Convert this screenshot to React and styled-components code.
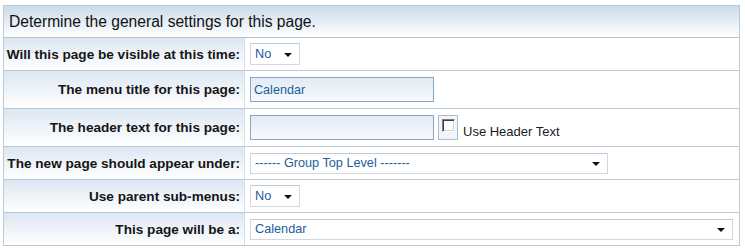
import React from "react";
import styled, { createGlobalStyle } from "styled-components";

const Global = createGlobalStyle`
  body {
    margin: 0;
    background: #ffffff;
    font-family: "Liberation Sans", Arial, sans-serif;
  }
`

const Panel = styled.div`
  margin: 5px 0 0 3px;
  width: 735px;
  border: 1px solid #b9c9d8;
  display: grid;
  grid-template-columns: 241px 1fr;
`

const Caption = styled.div`
  grid-column: 1 / 3;
  height: 31px;
  border-bottom: 1px solid #b3c3d1;
  background: linear-gradient(#c9dbeb, #ffffff);
  display: flex;
  align-items: center;
  padding-left: 5px;
  font-size: 15.6px;
  color: #111;
`

const Label = styled.div`
  height: ${p => p.$h}px;
  border-bottom: ${p => (p.$last ? "none" : "1px solid #b9c9d8")};
  border-right: 1px solid #d4dfe9;
  background: linear-gradient(#dce7f2, #ffffff);
  display: flex;
  align-items: center;
  justify-content: flex-end;
  padding-right: 4px;
  font-size: 13.6px;
  font-weight: bold;
  color: #151515;
`

const Value = styled.div`
  height: ${p => p.$h}px;
  border-bottom: ${p => (p.$last ? "none" : "1px solid #b9c9d8")};
  display: flex;
  align-items: center;
  gap: 4px;
  padding-left: 5px;
`

const Select = styled.div`
  box-sizing: border-box;
  width: ${p => p.$w}px;
  height: ${p => p.$ht || 21}px;
  border: 1px solid #cfd8e1;
  border-top-color: #c2c8ce;
  background: #fff;
  display: flex;
  align-items: center;
  justify-content: space-between;
  padding: 0 7px 0 4px;
  font-size: 12.7px;
  color: #1d5d9b;
`

const Arrow = styled.span`
  width: 0;
  height: 0;
  border-left: 4px solid transparent;
  border-right: 4px solid transparent;
  border-top: 4px solid #111;
  margin-top: 1px;
`

const TextInput = styled.div`
  box-sizing: border-box;
  width: 184px;
  height: 25px;
  border: 1px solid #88a6c4;
  background: linear-gradient(#e2ebf5, #f6f9fc);
  display: flex;
  align-items: center;
  padding-left: 3px;
  font-size: 12.6px;
  color: #1d5d9b;
`

const CheckFrame = styled.span`
  box-sizing: border-box;
  width: 20px;
  height: 25px;
  border: 1px solid #a9bdd0;
  background: #f1f5f9;
  display: flex;
  justify-content: center;
  padding-top: 3px;
`

const CheckBox = styled.span`
  box-sizing: border-box;
  width: 13px;
  height: 13px;
  border: 1px solid #fff;
  border-top-color: #7a7a7a;
  border-left-color: #7a7a7a;
  background: #fff;
  box-shadow: inset 1px 1px 0 #404040, inset -1px -1px 0 #d4d0c8;
`

const CheckText = styled.span`
  font-size: 13px;
  color: #1b1b1b;
  margin-top: 8px;
  margin-left: 1px;
`

const rows = [
  { label: "Will this page be visible at this time:", h: 32, kind: "no" },
  { label: "The menu title for this page:", h: 37, kind: "title" },
  { label: "The header text for this page:", h: 37, kind: "header" },
  { label: "The new page should appear under:", h: 32, kind: "parent" },
  { label: "Use parent sub-menus:", h: 32, kind: "no" },
  { label: "This page will be a:", h: 32, kind: "type" },
]

const renderControl = (kind) => {
  if (kind === "no") {
    return (
      <Select $w={50} $ht={22}>
        <span>No</span>
        <Arrow />
      </Select>
    )
  }
  if (kind === "title") {
    return <TextInput>Calendar</TextInput>
  }
  if (kind === "header") {
    return (
      <>
        <TextInput />
        <CheckFrame>
          <CheckBox />
        </CheckFrame>
        <CheckText>Use Header Text</CheckText>
      </>
    )
  }
  if (kind === "parent") {
    return (
      <Select $w={358}>
        <span>------ Group Top Level -------</span>
        <Arrow />
      </Select>
    )
  }
  return (
    <Select $w={483}>
      <span>Calendar</span>
      <Arrow />
    </Select>
  )
}

export default function App() {
  return (
    <>
      <Global />
      <Panel>
        <Caption>Determine the general settings for this page.</Caption>
        {rows.map((r, i) => {
          const last = i === rows.length - 1
          return (
            <React.Fragment key={r.label}>
              <Label $h={r.h} $last={last}>{r.label}</Label>
              <Value $h={r.h} $last={last}>{renderControl(r.kind)}</Value>
            </React.Fragment>
          )
        })}
      </Panel>
    </>
  )
}
